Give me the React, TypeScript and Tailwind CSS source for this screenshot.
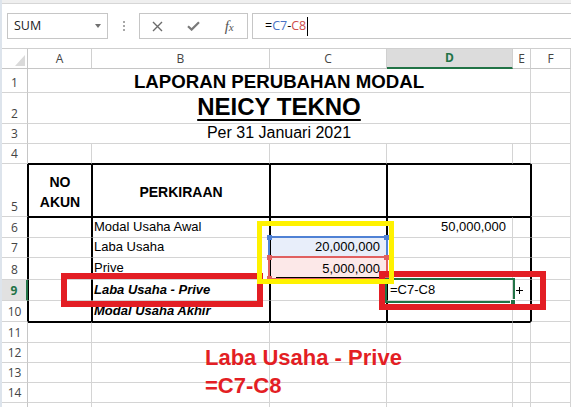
import React from "react";

const UI = "font-['Open_Sans','Noto_Sans',sans-serif]";

const RH = `flex items-end justify-center pb-[3px] text-[12px] leading-none text-[#444] border-r border-b border-r-[#c6c6c6] border-b-[#d4d4d4] ${UI}`;
const RHT = `flex items-end justify-center pb-[3px] text-[12px] leading-none text-[#444] border-r border-b border-r-black border-b-[#d4d4d4] ${UI}`;
const RH9 = `flex items-end justify-center pb-[3px] text-[12px] leading-none font-bold text-[#217346] bg-[#e1e1e1] border-r-2 border-b border-r-[#217346] border-b-[#d4d4d4] ${UI}`;
const GL = "border-r border-b border-r-[#d4d4d4] border-b-[#d4d4d4]";
const HD = `flex items-center justify-center text-[12px] leading-none text-[#444] border-r border-b border-r-[#d0d0d0] border-b-[#c6c6c6] ${UI}`;
const R4 = "border-r border-b border-r-[#d4d4d4] border-b-black";
const H5 = "border-t border-l border-r border-b border-t-black border-l-black border-r-black border-b-black";
const F5 = "border-l border-r border-b border-l-black border-r-[#d4d4d4] border-b-[#d4d4d4]";
const R11 = "border-t border-r border-b border-t-black border-r-[#d4d4d4] border-b-[#d4d4d4]";
const TX = "flex items-center text-[13px] leading-[1.15] whitespace-nowrap";

type RowProps = { n: string; top?: boolean; last?: boolean; hdr: string; b?: React.ReactNode; bCls?: string; c?: React.ReactNode; cBg?: string; d?: React.ReactNode; dCls?: string };

function TableRow({ n, top, last, hdr, b, bCls = "", c, cBg = "", d, dCls = "" }: RowProps) {
  const t = top ? "border-t border-t-black" : "";
  const bb = last ? "border-b border-b-black" : "border-b border-b-[#d4d4d4]";
  const lr = "border-l border-r border-l-black border-r-black";
  return (
    <>
      <div className={hdr}>{n}</div>
      <div className={`${lr} ${t} ${bb}`} />
      <div className={`${lr} ${t} ${bb} ${TX} pl-[1px] ${bCls}`}>{b}</div>
      <div className={`${lr} ${t} ${bb} ${cBg}`}>{c}</div>
      <div className={`border-l border-r border-l-black border-r-[#d4d4d4] ${t} ${bb} ${dCls}`}>{d}</div>
      <div className={`border-r border-r-black ${t} ${bb}`} />
      <div className={F5} />
    </>
  );
}

function PlainRow({ n }: { n: string }) {
  return (
    <>
      <div className={RH}>{n}</div>
      <div className={GL} />
      <div className={GL} />
      <div className={GL} />
      <div className={GL} />
      <div className={GL} />
      <div className={GL} />
    </>
  );
}

export default function App() {
  return (
    <div className="relative w-[571px] h-[407px] overflow-hidden bg-white border-l-2 border-l-[#dde4ec] font-['Liberation_Sans',Arial,sans-serif] text-black">
      {/* formula bar area */}
      <div className="h-[48px] flex flex-col">
        <div className="h-[4px] bg-[#efefef] border-b border-b-[#d6d6d6]" />
        <div className={`mt-[9px] h-[26px] flex ${UI}`}>
          <div className="ml-[5px] w-[101px] border border-[#c6c6c6] flex items-center justify-between pl-[6px] pr-[6px]">
            <span className="text-[12.5px] text-[#222] leading-none">SUM</span>
            <span className="w-0 h-0 border-l-[3px] border-r-[3px] border-t-[4px] border-l-transparent border-r-transparent border-t-[#707070]" />
          </div>
          <div className="w-[31px] flex flex-col items-center justify-center gap-[2px]">
            <span className="w-[2px] h-[2px] bg-[#a8a8a8]" />
            <span className="w-[2px] h-[2px] bg-[#a8a8a8]" />
            <span className="w-[2px] h-[2px] bg-[#a8a8a8]" />
          </div>
          <div className="w-[109px] border border-[#c6c6c6] flex">
            <div className="flex-1 flex items-center justify-center">
              <svg width="11" height="11" viewBox="0 0 11 11">
                <path d="M1 1L10 10M10 1L1 10" stroke="#6b6b6b" strokeWidth="1.4" fill="none" />
              </svg>
            </div>
            <div className="flex-1 flex items-center justify-center">
              <svg width="13" height="10" viewBox="0 0 13 10">
                <path d="M1 5.2L4.6 8.6L12 1.2" stroke="#7a7a7a" strokeWidth="2.2" fill="none" />
              </svg>
            </div>
            <div className="flex-1 flex items-center justify-center">
              <span className="font-['Liberation_Serif',serif] italic text-[15px] text-[#555] leading-none">
                f<span className="text-[11px]">x</span>
              </span>
            </div>
          </div>
          <div className="ml-[4px] flex-1 border border-r-0 border-[#c6c6c6] flex items-center pl-[12px] text-[12.5px] leading-none">
            <span className="text-black">=</span>
            <span className="text-[#4a72c4]">C7</span>
            <span className="text-black">-</span>
            <span className="text-[#cf4d4a]">C8</span>
            <span className="ml-[1px] w-px h-[19px] bg-black" />
          </div>
        </div>
      </div>

      {/* sheet grid */}
      <div className="border-t border-t-[#cfcfcf]">
        <div className="grid grid-cols-[26px_64px_178px_117px_126px_18px_1fr] grid-rows-[20px_24px_31px_20px_20px_53px_21px_20px_22px_21px_21px_21px_20px_20px_20px_20px]">
          {/* column headers */}
          <div className="flex items-end justify-end pr-[2px] pb-[2px] border-r border-b border-r-[#c6c6c6] border-b-[#c6c6c6]">
            <div className="w-[10px] h-[11px] bg-[#dadada] [clip-path:polygon(100%_0,100%_100%,0_100%)]" />
          </div>
          <div className={HD}>A</div>
          <div className={HD}>B</div>
          <div className={HD}>C</div>
          <div className={`flex items-center justify-center text-[12px] leading-none font-bold text-[#217346] bg-[#dcdcdc] border-r border-b-2 border-r-[#d0d0d0] border-b-[#217346] ${UI}`}>D</div>
          <div className={HD}>E</div>
          <div className={HD}>F</div>

          {/* row 1 */}
          <div className={RH}>1</div>
          <div className={`col-span-5 ${GL} flex items-end justify-center text-[18.67px] font-bold leading-[1.15] whitespace-nowrap`}>LAPORAN PERUBAHAN MODAL</div>
          <div className={GL} />

          {/* row 2 */}
          <div className={RH}>2</div>
          <div className={`col-span-5 ${GL} flex items-end justify-center pb-[2px] text-[24px] font-bold leading-[1.15] whitespace-nowrap`}>
            <span className="underline decoration-[2px] underline-offset-[4px]">NEICY TEKNO</span>
          </div>
          <div className={GL} />

          {/* row 3 */}
          <div className={RH}>3</div>
          <div className={`col-span-5 ${GL} flex items-end justify-center pb-[1px] text-[16px] leading-[1.15] whitespace-nowrap`}>Per 31 Januari 2021</div>
          <div className={GL} />

          {/* row 4 */}
          <div className={RH}>4</div>
          <div className={R4} />
          <div className={R4} />
          <div className={R4} />
          <div className={R4} />
          <div className={R4} />
          <div className={GL} />

          {/* row 5 */}
          <div className={RHT}>5</div>
          <div className={`${H5} flex flex-col items-center justify-center pt-[2px] text-[14px] font-bold leading-[20px]`}>
            <span>NO</span>
            <span>AKUN</span>
          </div>
          <div className={`${H5} flex items-center justify-center pt-[2px] text-[14px] font-bold leading-[20px]`}>PERKIRAAN</div>
          <div className={H5} />
          <div className={`col-span-2 ${H5}`} />
          <div className={F5} />

          {/* rows 6-10 */}
          <TableRow n="6" top hdr={RHT} b="Modal Usaha Awal" d="50,000,000" dCls={`${TX} justify-end pr-[6px]`} />
          <TableRow
            n="7"
            hdr={RHT}
            b="Laba Usaha"
            cBg={`bg-[#e8eefa] ${TX} justify-end pr-[6px]`}
            c="20,000,000"
          />
          <TableRow
            n="8"
            hdr={RHT}
            b="Prive"
            cBg="bg-[#fce8e8] flex items-end pb-[1px] pl-[5px] pr-[6px]"
            c={<div className="w-full border-b border-b-black text-right text-[13px] leading-[1.15]">5,000,000</div>}
          />
          <TableRow n="9" hdr={RH9} b="Laba Usaha - Prive" bCls="font-bold italic" d="=C7-C8" dCls={`${TX} pl-[2px]`} />
          <TableRow n="10" last hdr={RHT} b="Modal Usaha Akhir" bCls="font-bold italic" />

          {/* row 11 */}
          <div className={RH}>11</div>
          <div className={R11} />
          <div className={R11} />
          <div className={R11} />
          <div className={R11} />
          <div className={R11} />
          <div className={GL} />

          <PlainRow n="12" />
          <PlainRow n="13" />
          <PlainRow n="14" />
          <PlainRow n="" />
        </div>
      </div>

      {/* reference highlights */}
      <div className="absolute left-[266px] top-[236px] w-[120px] h-[22px] border-2 border-[#4f81d4]" />
      <div className="absolute left-[266px] top-[256px] w-[120px] h-[24px] border-2 border-[#e06060]" />
      <div className="absolute left-[265px] top-[235px] w-[5px] h-[5px] bg-[#4f81d4]" />
      <div className="absolute left-[382px] top-[235px] w-[5px] h-[5px] bg-[#4f81d4]" />
      <div className="absolute left-[265px] top-[255px] w-[5px] h-[5px] bg-[#e06060]" />
      <div className="absolute left-[382px] top-[255px] w-[5px] h-[5px] bg-[#e06060]" />
      <div className="absolute left-[265px] top-[276px] w-[5px] h-[5px] bg-[#e06060]" />
      <div className="absolute left-[382px] top-[276px] w-[5px] h-[5px] bg-[#e06060]" />

      {/* active cell */}
      <div className="absolute left-[383px] top-[278px] w-[130px] h-[25px] border-2 border-[#217346]" />
      <div className="absolute left-[508px] top-[299px] w-[6px] h-[6px] bg-[#217346] border border-white" />

      {/* annotations */}
      <div className="absolute left-[377px] top-[271px] w-[167px] h-[39px] border-[6px] border-[#e31e24]" />
      <div className="absolute left-[59px] top-[273px] w-[202px] h-[34px] border-[6px] border-[#e31e24]" />
      <div className="absolute left-[255px] top-[221px] w-[137px] h-[63px] border-[5px] border-[#fff200]" />

      {/* mouse cursor */}
      <svg className="absolute left-[514px] top-[287px]" width="7" height="7" viewBox="0 0 7 7">
        <path d="M3.5 0V7M0 3.5H7" stroke="#000" strokeWidth="1" fill="none" />
      </svg>

      <div className="absolute left-[203px] top-[344px] text-[22px] font-bold leading-[28px] text-[#e31e24] whitespace-nowrap">
        <div>Laba Usaha - Prive</div>
        <div>=C7-C8</div>
      </div>
    </div>
  );
}
